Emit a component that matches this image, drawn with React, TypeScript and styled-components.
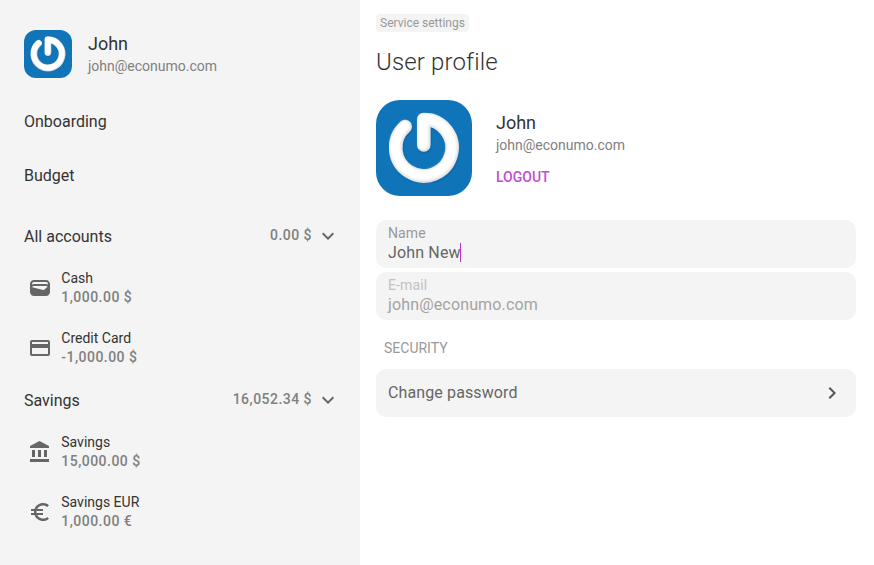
import React from "react";
import styled, { createGlobalStyle } from "styled-components";

const GlobalStyle = createGlobalStyle`
  *, *::before, *::after { box-sizing: border-box; }
  body {
    margin: 0;
    background: #fff;
    font-family: Roboto, "Liberation Sans", sans-serif;
    -webkit-font-smoothing: antialiased;
    overflow: hidden;
  }
`;

const Page = styled.div`
  display: flex;
  height: 100vh;
`;

const Sidebar = styled.aside`
  flex: none;
  width: 360px;
  padding: 30px 20px 0 24px;
  background: #f4f4f4;
`;

const Main = styled.main`
  flex: 1;
  display: flex;
  flex-direction: column;
  align-items: flex-start;
  padding: 14px 18px 0 16px;
`;

const AvatarFrame = styled.svg<{ $size: number }>`
  display: block;
  flex: none;
  width: ${(p) => p.$size}px;
  height: ${(p) => p.$size}px;
  border-radius: ${(p) => p.$size / 4}px;
`;

const SidebarUser = styled.div`
  display: flex;
  gap: 16px;
  height: 48px;
`;

const UserText = styled.div<{ $top: number }>`
  padding-top: ${(p) => p.$top}px;
`;

const UserName = styled.div`
  font-size: 18px;
  line-height: 24px;
  color: #333;
`;

const UserEmail = styled.div`
  font-size: 14px;
  line-height: 20px;
  color: #808080;
`;

const Nav = styled.nav`
  padding-top: 17px;
`;

const NavItem = styled.div`
  height: 54px;
  line-height: 54px;
  font-size: 16px;
  color: #333;
`;

const Folder = styled.section<{ $top?: number }>`
  padding-top: ${(p) => p.$top ?? 0}px;
`;

const FolderHeader = styled.div`
  display: flex;
  align-items: center;
  height: 44px;
`;

const FolderName = styled.div`
  flex: 1;
  padding-top: 2px;
  font-size: 16px;
  line-height: 24px;
  color: #333;
`;

const FolderTotal = styled.div`
  margin: -2px 4px 0 0;
  font-size: 14px;
  line-height: 20px;
  font-weight: 500;
  letter-spacing: 0.47px;
  color: #808080;
`;

const Account = styled.div`
  display: flex;
  align-items: center;
  height: 60px;
  padding-left: 4px;
`;

const AccountText = styled.div`
  display: flex;
  flex-direction: column;
  gap: 1px;
  padding: 0 0 1px 9.3px;
`;

const AccountName = styled.div`
  font-size: 14px;
  line-height: 18px;
  color: #333;
`;

const AccountBalance = styled.div`
  font-size: 14px;
  line-height: 18px;
  font-weight: 500;
  letter-spacing: 0.47px;
  color: #808080;
`;

const Glyph = styled.svg<{ $color?: string }>`
  display: block;
  flex: none;
  width: 24px;
  height: 24px;
  fill: ${(p) => p.$color ?? "#666"};
`;

const Chip = styled.div`
  height: 18px;
  padding: 0 4px;
  border-radius: 4px;
  background: #f4f4f4;
  font-size: 12px;
  line-height: 18px;
  color: #999;
`;

const Title = styled.h1`
  margin: 14px 0 0;
  font-size: 24px;
  line-height: 32px;
  font-weight: 300;
  letter-spacing: 0.15px;
  color: #333;
`;

const Profile = styled.div`
  display: flex;
  gap: 24px;
  height: 96px;
  margin-top: 22px;
`;

const Logout = styled.button`
  display: block;
  margin: 12px 0 0;
  padding: 0;
  border: 0;
  background: none;
  font: 500 14px/20px Roboto, "Liberation Sans", sans-serif;
  color: #bf4cd2;
`;

const Fields = styled.div`
  display: flex;
  flex-direction: column;
  gap: 4px;
  width: 100%;
  margin-top: 24px;
`;

const Field = styled.div<{ $disabled?: boolean }>`
  height: 48px;
  padding: 4px 12px;
  border-radius: 10px;
  background: #f4f4f4;
  color: ${(p) => (p.$disabled ? "#a3a3a3" : "#666")};
`;

const FieldLabel = styled.div<{ $disabled?: boolean }>`
  font-size: 14px;
  line-height: 18px;
  letter-spacing: 0.12px;
  color: ${(p) => (p.$disabled ? "#c2c2c2" : "#999")};
`;

const FieldValue = styled.div`
  display: flex;
  align-items: center;
  height: 21px;
  font-size: 16px;
  letter-spacing: 0.15px;
`;

const Caret = styled.span`
  flex: none;
  width: 1px;
  height: 19px;
  margin-left: -1px;
  background: #bf2fd2;
`;

const SectionTitle = styled.h2`
  margin: 18px 0 0 8px;
  font-size: 14px;
  line-height: 20px;
  font-weight: 400;
  color: #999;
`;

const SettingRow = styled.div`
  display: flex;
  align-items: center;
  justify-content: space-between;
  width: 100%;
  height: 48px;
  margin-top: 11px;
  padding: 0 12px 1px;
  border-radius: 10px;
  background: #f4f4f4;
  font-size: 16px;
  letter-spacing: 0.12px;
  color: #666;
`;

const icons = {
  wallet:
    "M18 4H6C3.79 4 2 5.79 2 8v8c0 2.21 1.79 4 4 4h12c2.21 0 4-1.79 4-4V8c0-2.21-1.79-4-4-4zm-1.86 9.77c-.24.2-.57.28-.88.2L4.15 11.25C4.45 10.52 5.16 10 6 10h12c.67 0 1.26.34 1.63.84l-3.49 2.93zM6 6h12c1.1 0 2 .9 2 2v.55c-.59-.34-1.27-.55-2-.55H6c-.73 0-1.41.21-2 .55V8c0-1.1.9-2 2-2z",
  card: "M20 4H4c-1.11 0-1.99.89-1.99 2L2 18c0 1.11.89 2 2 2h16c1.11 0 2-.89 2-2V6c0-1.11-.89-2-2-2zm0 14H4v-6h16v6zm0-10H4V6h16v2z",
  bank: "M4 10v7h3v-7H4zm6 0v7h3v-7h-3zM2 22h19v-3H2v3zm14-12v7h3v-7h-3zm-4.500-9L2 6v2h19V6l-9.500-5z",
  euro: "M15 18.500c-2.510 0-4.680-1.420-5.760-3.500H15v-2H8.580c-.05-.33-.08-.66-.08-1s.03-.67.08-1H15V9H9.240C10.320 6.920 12.500 5.500 15 5.500c1.610 0 3.090.59 4.230 1.570L21 5.300C19.410 3.870 17.300 3 15 3c-3.920 0-7.240 2.510-8.480 6H3v2h3.060c-.04.33-.06.66-.06 1s.02.67.06 1H3v2h3.520c1.240 3.490 4.560 6 8.480 6 2.310 0 4.410-.87 6-2.300l-1.780-1.770c-1.130.98-2.600 1.570-4.220 1.570z",
  down: "M7.410 8.590 12 13.170l4.590-4.580L18 10l-6 6-6-6z",
  right: "M10 6 8.590 7.410 13.170 12l-4.580 4.590L10 18l6-6z",
};

type IconName = keyof typeof icons;

function Icon({ name, color }: { name: IconName; color?: string }) {
  return (
    <Glyph viewBox="0 0 24 24" $color={color} aria-hidden="true">
      <path d={icons[name]} />
    </Glyph>
  );
}

const ringPath = "M29.2 26.6A28.2 28.2 0 1 0 47.800 19.500V45";

function Avatar({ size }: { size: number }) {
  const id = `bevel-${size}`;
  return (
    <AvatarFrame $size={size} viewBox="0 0 96 96" role="img" aria-label="John">
      <defs>
        <filter id={id} x="-10%" y="-10%" width="120%" height="120%">
          <feGaussianBlur stdDeviation="1" />
        </filter>
      </defs>
      <rect width="96" height="96" fill="#1074b9" />
      <g fill="none" strokeLinecap="round" strokeLinejoin="round">
        <path d={ringPath} stroke="#0a609e" strokeWidth="13.5" transform="translate(.5 .8)" filter={`url(#${id})`} />
        <path d={ringPath} stroke="#dfe0e2" strokeWidth="13.6" />
        <path d={ringPath} stroke="#fff" strokeWidth="10.5" transform="translate(-.4 -.7)" filter={`url(#${id})`} />
      </g>
    </AvatarFrame>
  );
}

interface AccountData {
  icon: IconName;
  name: string;
  balance: string;
}

const folders: { name: string; total: string; accounts: AccountData[] }[] = [
  {
    name: "All accounts",
    total: "0.00 $",
    accounts: [
      { icon: "wallet", name: "Cash", balance: "1,000.00 $" },
      { icon: "card", name: "Credit Card", balance: "-1,000.00 $" },
    ],
  },
  {
    name: "Savings",
    total: "16,052.34 $",
    accounts: [
      { icon: "bank", name: "Savings", balance: "15,000.00 $" },
      { icon: "euro", name: "Savings EUR", balance: "1,000.00 €" },
    ],
  },
];

export default function App() {
  return (
    <>
      <GlobalStyle />
      <Page>
        <Sidebar>
          <SidebarUser>
            <Avatar size={48} />
            <UserText $top={2}>
              <UserName>John</UserName>
              <UserEmail>john@econumo.com</UserEmail>
            </UserText>
          </SidebarUser>
          <Nav>
            <NavItem>Onboarding</NavItem>
            <NavItem>Budget</NavItem>
          </Nav>
          {folders.map((folder, i) => (
            <Folder key={folder.name} $top={i === 0 ? 11 : 0}>
              <FolderHeader>
                <FolderName>{folder.name}</FolderName>
                <FolderTotal>{folder.total}</FolderTotal>
                <Icon name="down" />
              </FolderHeader>
              {folder.accounts.map((account) => (
                <Account key={account.name}>
                  <Icon name={account.icon} />
                  <AccountText>
                    <AccountName>{account.name}</AccountName>
                    <AccountBalance>{account.balance}</AccountBalance>
                  </AccountText>
                </Account>
              ))}
            </Folder>
          ))}
        </Sidebar>
        <Main>
          <Chip>Service settings</Chip>
          <Title>User profile</Title>
          <Profile>
            <Avatar size={96} />
            <UserText $top={11}>
              <UserName>John</UserName>
              <UserEmail>john@econumo.com</UserEmail>
              <Logout>LOGOUT</Logout>
            </UserText>
          </Profile>
          <Fields>
            <Field>
              <FieldLabel>Name</FieldLabel>
              <FieldValue>
                John New
                <Caret />
              </FieldValue>
            </Field>
            <Field $disabled>
              <FieldLabel $disabled>E-mail</FieldLabel>
              <FieldValue>john@econumo.com</FieldValue>
            </Field>
          </Fields>
          <SectionTitle>SECURITY</SectionTitle>
          <SettingRow>
            Change password
            <Icon name="right" color="#555" />
          </SettingRow>
        </Main>
      </Page>
    </>
  );
}
